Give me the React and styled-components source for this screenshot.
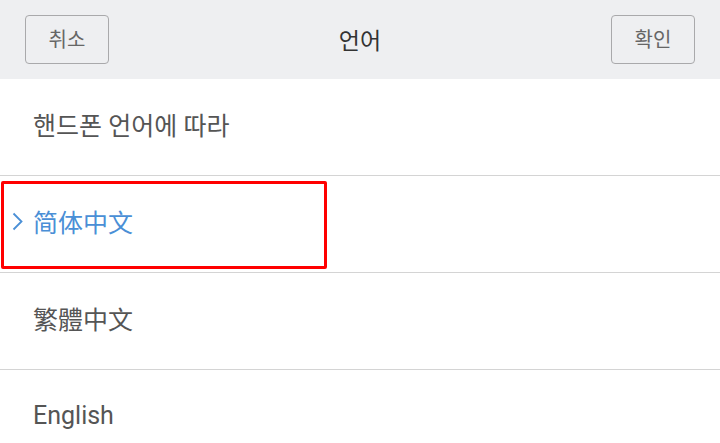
import React from 'react'
import styled, { createGlobalStyle } from 'styled-components'

const GlobalStyle = createGlobalStyle`
  html, body {
    margin: 0;
    padding: 0;
    background: #ffffff;
    font-family: Roboto, "Noto Sans CJK KR", "Noto Sans CJK SC", sans-serif;
  }
`

const Page = styled.div`
  width: 720px;
  height: 443px;
  overflow: hidden;
  background: #ffffff;
`

const Header = styled.div`
  height: 79px;
  box-sizing: border-box;
  padding: 0 25px;
  background: #eeeff1;
  display: flex;
  align-items: center;
  justify-content: space-between;
`

const HeaderButton = styled.button`
  width: 84px;
  height: 49px;
  margin-top: 0;
  border: 1px solid #a9a9ab;
  border-radius: 4px;
  background: transparent;
  color: #666666;
  font-family: Roboto, "Noto Sans CJK KR", sans-serif;
  font-size: 20px;
  padding: 0 0 2px;
`

const Title = styled.div`
  font-size: 23px;
  color: #333333;
  padding-bottom: 2px;
`

const List = styled.div`
  display: flex;
  flex-direction: column;
`

const Row = styled.div`
  position: relative;
  height: 97px;
  box-sizing: border-box;
  border-bottom: 1px solid #d4d4d4;
  display: flex;
  align-items: center;
  padding: 0 0 6px 33px;
  font-size: 25px;
  color: ${p => (p.selected ? '#4a8fd6' : '#555555')};
  font-family: Roboto, ${p => p.lang || '"Noto Sans CJK KR"'}, sans-serif;
`

const Chevron = styled.svg`
  position: absolute;
  left: 11px;
  top: 50%;
  margin-top: -12px;
`

const Highlight = styled.div`
  position: absolute;
  left: 1px;
  top: 5px;
  width: 326px;
  height: 88px;
  box-sizing: border-box;
  border: 3px solid #ff0000;
  border-radius: 2px;
  pointer-events: none;
`

const languages = [
  { label: '핸드폰 언어에 따라', lang: '"Noto Sans CJK KR"' },
  { label: '简体中文', lang: '"Noto Sans CJK SC"', selected: true },
  { label: '繁體中文', lang: '"Noto Sans CJK TC"' },
  { label: 'English' },
]

export default function App() {
  return (
    <Page>
      <GlobalStyle />
      <Header>
        <HeaderButton>취소</HeaderButton>
        <Title>언어</Title>
        <HeaderButton>확인</HeaderButton>
      </Header>
      <List>
        {languages.map(item => (
          <Row key={item.label} selected={item.selected} lang={item.lang}>
            {item.selected && (
              <>
                <Chevron width="13" height="19" viewBox="0 0 13 19">
                  <path d="M2.5 1.5 L10.5 9.5 L2.5 17.5" fill="none" stroke="#4a8fd6" strokeWidth="1.8" />
                </Chevron>
                <Highlight />
              </>
            )}
            {item.label}
          </Row>
        ))}
      </List>
    </Page>
  )
}
